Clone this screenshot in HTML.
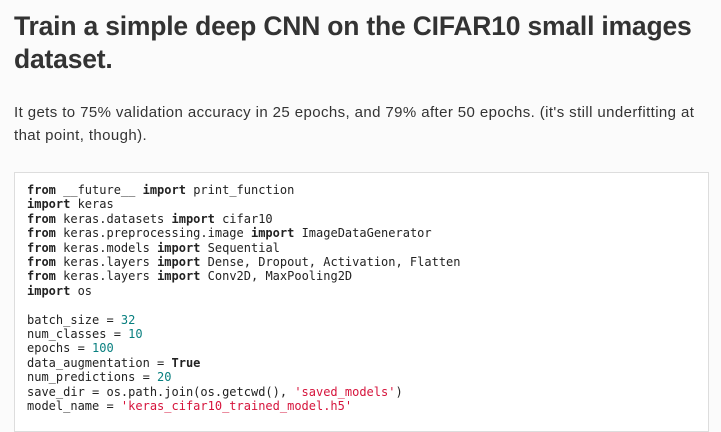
<!DOCTYPE html>
<html><head><meta charset="utf-8"><style>
html,body{margin:0;padding:0;background:#fbfbfb;width:721px;height:419px;overflow:hidden}
body{font-family:"Liberation Sans",sans-serif;color:#333}
h1{position:absolute;left:14px;top:10px;margin:0;font-size:26.5px;line-height:33px;font-weight:bold;color:#333;width:700px;letter-spacing:-0.2px}
p{position:absolute;left:14px;top:101px;margin:0;font-size:15px;line-height:23px;color:#333;white-space:nowrap;letter-spacing:0.4px}
.box{position:absolute;left:14px;top:172px;width:695px;height:260px;background:#fff;border:1px solid #ddd;box-sizing:border-box}
pre{position:absolute;left:27px;top:183px;margin:0;font-family:"DejaVu Sans Mono","Liberation Mono",monospace;font-size:12px;line-height:14.4px;color:#222}
b{font-weight:bold}
.n{color:#087f7f}.s{color:#d6143c}
</style></head><body>
<h1>Train a simple deep CNN on the CIFAR10 small images dataset.</h1>
<p>It gets to 75% validation accuracy in 25 epochs, and 79% after 50 epochs. (it's still underfitting at<br>that point, though).</p>
<div class="box"></div>
<pre><b>from</b> __future__ <b>import</b> print_function
<b>import</b> keras
<b>from</b> keras.datasets <b>import</b> cifar10
<b>from</b> keras.preprocessing.image <b>import</b> ImageDataGenerator
<b>from</b> keras.models <b>import</b> Sequential
<b>from</b> keras.layers <b>import</b> Dense, Dropout, Activation, Flatten
<b>from</b> keras.layers <b>import</b> Conv2D, MaxPooling2D
<b>import</b> os

batch_size = <span class="n">32</span>
num_classes = <span class="n">10</span>
epochs = <span class="n">100</span>
data_augmentation = <b>True</b>
num_predictions = <span class="n">20</span>
save_dir = os.path.join(os.getcwd(), <span class="s">'saved_models'</span>)
model_name = <span class="s">'keras_cifar10_trained_model.h5'</span></pre>
</body></html>
